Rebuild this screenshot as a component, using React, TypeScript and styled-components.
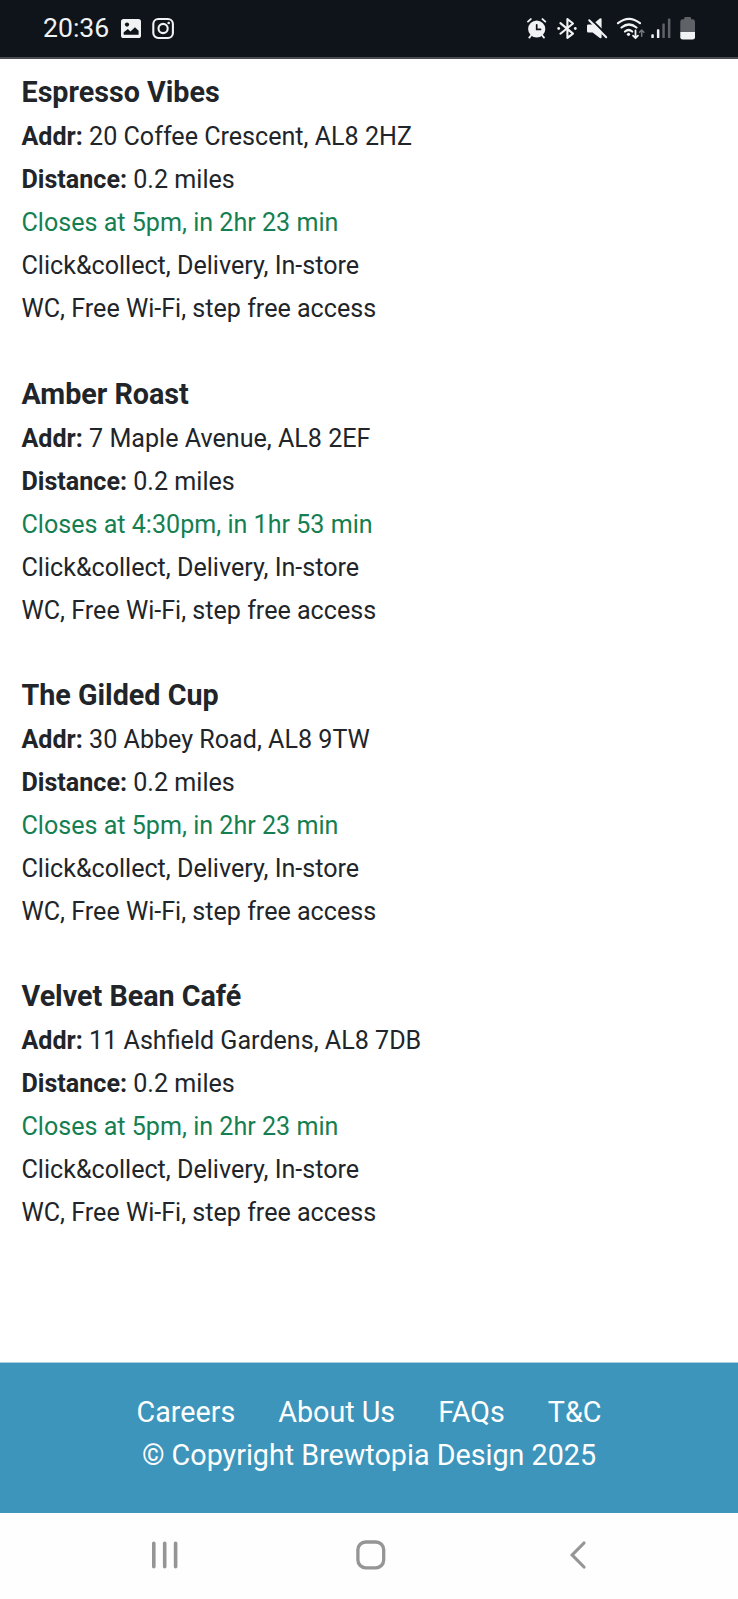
import React from 'react';
import styled, { createGlobalStyle } from 'styled-components';

const Global = createGlobalStyle`
  * { box-sizing: border-box; }
  body { margin: 0; background: #fff; font-family: Roboto, sans-serif; color: #212529; }
`;
const Screen = styled.div`
  display: flex;
  flex-direction: column;
  height: 1599px;
  width: 738px;
  overflow: hidden;
`;
const StatusBar = styled.header`
  height: 59px;
  flex: none;
  background: #0f141b;
  border-bottom: 2px solid #4b4c50;
  color: #f1f2f3;
  display: flex;
  justify-content: space-between;
  align-items: center;
  padding: 0 42px 1px 43px;
`;
const Group = styled.div`
  display: flex;
  align-items: center;
`;
const Clock = styled.span`
  width: 78px;
  font-size: 26.6px;
  line-height: 30px;
`;
const Icon = styled.svg<{ $before?: number }>`
  display: block;
  flex: none;
  overflow: visible;
  margin-left: ${p => p.$before ?? 0}px;
`;
const List = styled.main`
  flex: 1;
  padding: 12.4px 21.5px 0;
`;
const Shop = styled.section`
  height: 301.3px;
`;
const Name = styled.h2`
  margin: 0 0 1px;
  font-size: 28.7px;
  line-height: 43px;
  font-weight: 700;
`;
const Line = styled.p<{ $open?: boolean }>`
  margin: 0;
  font-size: 25.1px;
  line-height: 43px;
  white-space: nowrap;
  color: ${p => (p.$open ? '#157f51' : 'inherit')};
`;
const Footer = styled.footer`
  height: 151px;
  flex: none;
  background: #3d95bc;
  border-top: 1px solid #a9cfe0;
  color: #fff;
  padding-top: 28px;
  text-align: center;
  font-size: 28.7px;
  line-height: 43px;
`;
const Links = styled.nav`
  display: flex;
  justify-content: center;
  gap: 43px;
`;
const NavBar = styled.div`
  height: 86px;
  flex: none;
  background: #fefefe;
  display: flex;
  align-items: center;
  padding: 0 0 2px 151px;
`;

const ink = '#f1f2f3';
const dim = '#5f6267';
const bar = '#0f141b';
const nav = '#959595';

const shops = [
  ['Espresso Vibes', '20 Coffee Crescent, AL8 2HZ', 'Closes at 5pm, in 2hr 23 min'],
  ['Amber Roast', '7 Maple Avenue, AL8 2EF', 'Closes at 4:30pm, in 1hr 53 min'],
  ['The Gilded Cup', '30 Abbey Road, AL8 9TW', 'Closes at 5pm, in 2hr 23 min'],
  ['Velvet Bean Café', '11 Ashfield Gardens, AL8 7DB', 'Closes at 5pm, in 2hr 23 min'],
];

const ImageIcon = () => (
  <Icon width="20" height="24" viewBox="0 0 20 24">
    <rect x="0" y="3" width="20" height="19" rx="2.6" fill={ink} />
    <circle cx="6" cy="8.6" r="2.1" fill={bar} />
    <path d="M2.7 18.8v-2.6L6.9 13l2.5 2.4L14 11.2l3.6 3.5v4.1z" fill={bar} />
  </Icon>
);
const InstagramIcon = () => (
  <Icon $before={11} width="22" height="24" viewBox="0 0 22 24" fill="none" stroke={ink}>
    <rect x="1.3" y="3" width="19.6" height="19" rx="5" strokeWidth="2.1" />
    <circle cx="11.1" cy="12.5" r="4.6" strokeWidth="2.1" />
    <circle cx="16.7" cy="7" r="1.3" fill={ink} stroke="none" />
  </Icon>
);
const AlarmIcon = () => (
  <Icon width="20" height="24" viewBox="0 0 20 24" fill="none" strokeLinecap="round">
    <path d="M1 5.6 3.8 3.1M18.3 5.6l-2.8-2.5M4 19.5 2.3 21.6M15.3 19.5l1.7 2.1" stroke={ink} strokeWidth="1.9" />
    <circle cx="9.7" cy="13" r="8.6" fill={ink} />
    <path d="M9.7 8.8v4.6h3.8" stroke={bar} strokeWidth="1.7" />
  </Icon>
);
const BluetoothIcon = () => (
  <Icon $before={10} width="20" height="24" viewBox="0 0 20 24" fill="none">
    <path d="M3.4 7.1 16 17.6l-5.6 4.3V3l5.6 4.5L3.4 17.7" stroke={ink} strokeWidth="2.1" strokeLinecap="round" strokeLinejoin="round" />
    <circle cx="1.7" cy="12.5" r="1.4" fill={ink} />
    <circle cx="18.3" cy="12.5" r="1.4" fill={ink} />
  </Icon>
);
const MuteIcon = () => (
  <Icon $before={10} width="20" height="24" viewBox="0 0 20 24">
    <path d="M1.3 8.4h4.3l7.2-5.9q1.8-1 1.8.7v18q0 1.7-1.8.7L5.6 16.5H1.3Q0 16.5 0 15.2V9.7q0-1.3 1.3-1.3z" fill={ink} />
    <path d="M3.4 2.6 20.3 19.5" stroke={bar} strokeWidth="2" />
    <path d="m2.2 4.2 17 17" stroke={ink} strokeWidth="2" strokeLinecap="round" />
  </Icon>
);
const WifiIcon = () => (
  <Icon $before={10} width="28" height="24" viewBox="0 0 28 24" fill="none" strokeLinecap="round" strokeLinejoin="round">
    <path d="M1 7.2Q12-1.6 23 7.2M4.5 11.5q7.5-6 15 0M8 15.5q3.6-3 7.2 0" stroke={ink} strokeWidth="2.2" />
    <circle cx="11.5" cy="18.3" r="1.6" fill={ink} />
    <path d="M18.5 14.5v7.5m-2.5-2.3 2.5 2.5 2.5-2.5" stroke={ink} strokeWidth="1.8" />
    <path d="M24.7 20.2v-6m-2.2 2 2.2-2.2 2.2 2.2" stroke="#77797d" strokeWidth="1.5" />
  </Icon>
);
const SignalIcon = () => (
  <Icon $before={6} width="20" height="24" viewBox="0 0 20 24">
    <rect x="0.3" y="18.2" width="2.5" height="3.9" rx=".7" fill={ink} />
    <rect x="5.9" y="13.3" width="2.5" height="8.8" rx=".7" fill={ink} />
    <rect x="11.3" y="7.4" width="2.5" height="14.7" rx=".7" fill={dim} />
    <rect x="16.9" y="2.4" width="2.5" height="19.7" rx=".7" fill={dim} />
  </Icon>
);
const BatteryIcon = () => (
  <Icon $before={9} width="16" height="24" viewBox="0 0 16 24">
    <path d="M4.2 3.3V2.3q0-1.2 1.2-1.2h4.5q1.2 0 1.2 1.2v1h1.5q2.4 0 2.4 2.4V16H.3V5.7q0-2.4 2.4-2.4z" fill={dim} />
    <path d="M.3 16H15v5.200q0 2.400-2.400 2.400H2.700Q.3 23.600.3 21.200z" fill={ink} />
  </Icon>
);

export default function App() {
  return (
    <Screen>
      <Global />
      <StatusBar>
        <Group>
          <Clock>20:36</Clock>
          <ImageIcon />
          <InstagramIcon />
        </Group>
        <Group>
          <AlarmIcon />
          <BluetoothIcon />
          <MuteIcon />
          <WifiIcon />
          <SignalIcon />
          <BatteryIcon />
        </Group>
      </StatusBar>
      <List>
        {shops.map(([name, addr, hours]) => (
          <Shop key={name}>
            <Name>{name}</Name>
            <Line><b>Addr:</b> {addr}</Line>
            <Line><b>Distance:</b> 0.2 miles</Line>
            <Line $open>{hours}</Line>
            <Line>Click&amp;collect, Delivery, In-store</Line>
            <Line>WC, Free Wi-Fi, step free access</Line>
          </Shop>
        ))}
      </List>
      <Footer>
        <Links><span>Careers</span><span>About Us</span><span>FAQs</span><span>T&amp;C</span></Links>
        <div>© Copyright Brewtopia Design 2025</div>
      </Footer>
      <NavBar>
        <Icon width="28" height="30" viewBox="0 0 28 30" stroke={nav} strokeWidth="3.6" strokeLinecap="round">
          <path d="M2.8 3.3v23.4M13.700 3.300v23.400M24.600 3.300v23.400" />
        </Icon>
        <Icon $before={177} width="30" height="30" viewBox="0 0 30 30" fill="none" stroke={nav} strokeWidth="3.3">
          <rect x="1.9" y="2" width="25.8" height="25.8" rx="7.8" />
        </Icon>
        <Icon $before={182.5} width="18" height="30" viewBox="0 0 18 30" fill="none" stroke={nav} strokeWidth="3.2" strokeLinecap="round">
          <path d="M15 3 3.2 15 15 27" />
        </Icon>
      </NavBar>
    </Screen>
  );
}
